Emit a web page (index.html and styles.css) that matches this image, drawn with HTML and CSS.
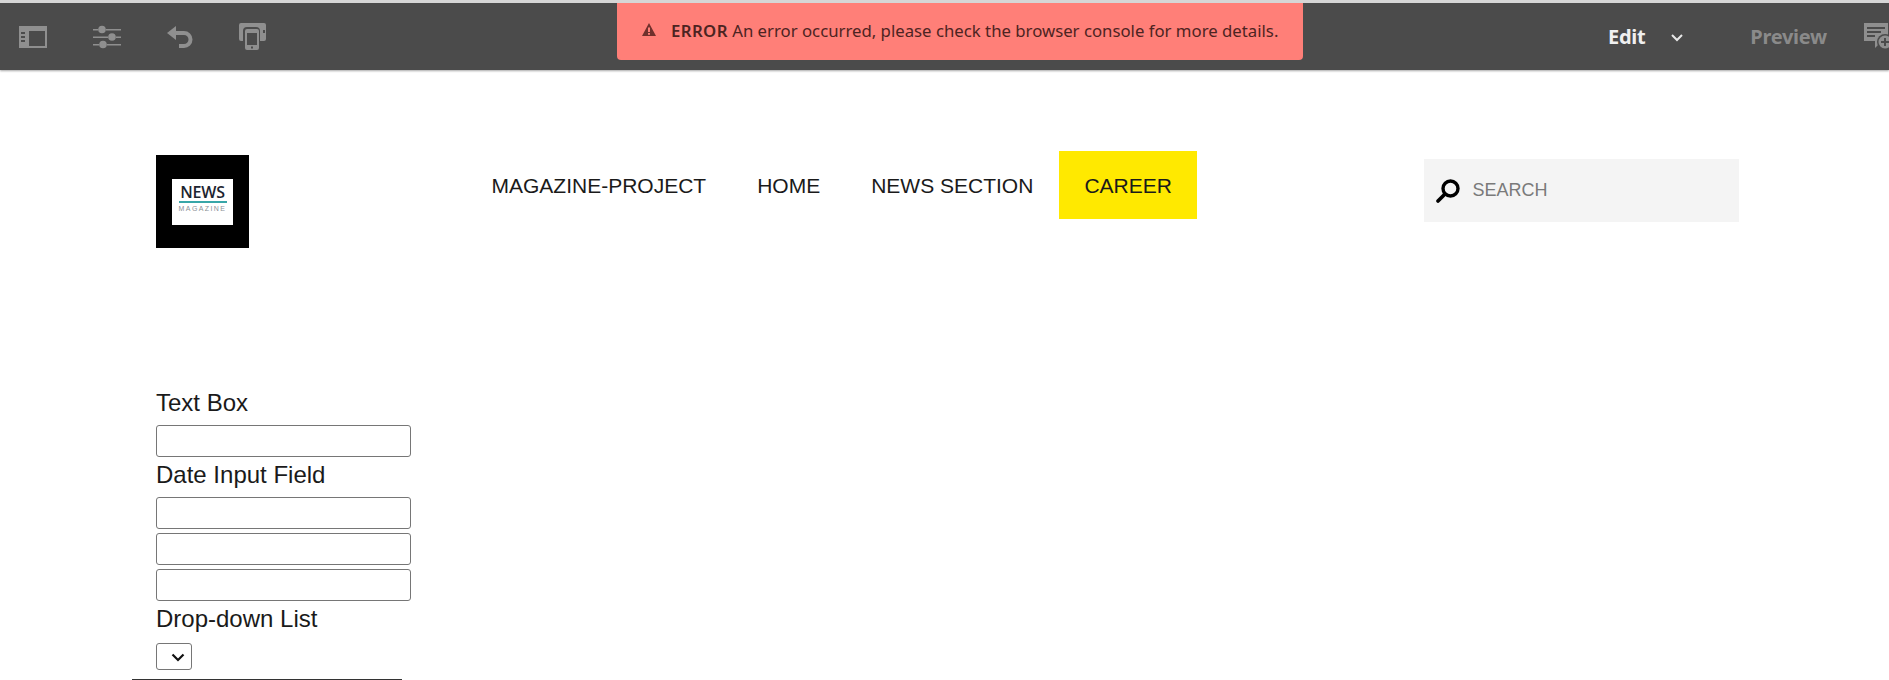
FILE: index.html
```html
<!DOCTYPE html>
<html lang="en">
<head>
<meta charset="utf-8">
<title>Career</title>
<link rel="stylesheet" href="styles.css">
</head>
<body>
<div class="toolbar">
  <div class="tools">
    <svg class="tool" viewBox="0 0 28 22" width="28" height="22"><path fill="#8f8f8f" fill-rule="evenodd" d="M0 0h28v22H0zM10 5v15h16V5zM2 6v2h4V6zM2 10v2h4v-2zM2 14v2h4v-2z"/></svg>
    <svg class="tool" viewBox="0 0 28 24" width="28" height="24"><g fill="#8f8f8f"><path d="M0 4h5v1.500H0zM13 4h15v1.500H13zM0 11.500h15V13H0zM23 11.500h5V13h-5zM0 19h6v1.500H0zM14 19h14v1.500H14z"/><circle cx="9" cy="4.500" r="3.800"/><circle cx="19" cy="12" r="3.800"/><circle cx="10" cy="19.500" r="3.800"/></g></svg>
    <svg class="tool" viewBox="0 0 26 22" width="26" height="22"><path fill="none" stroke="#8f8f8f" stroke-width="4" d="M4 7h13a6.500 6.500 0 0 1 0 13h-5"/><path fill="#8f8f8f" d="M9 0v14L0 7z"/></svg>
    <svg class="tool" viewBox="0 0 27 27" width="27" height="27"><path fill="#8f8f8f" fill-rule="evenodd" d="M2 0h23a2 2 0 0 1 2 2v14a2 2 0 0 1-2 2h-4V8a4 4 0 0 0-4-4H8a4 4 0 0 0-4 4v10H2a2 2 0 0 1-2-2V2a2 2 0 0 1 2-2zm22 7v3h2V7z"/><path fill="#8f8f8f" fill-rule="evenodd" d="M8 6h10a2 2 0 0 1 2 2v17a2 2 0 0 1-2 2H8a2 2 0 0 1-2-2V8a2 2 0 0 1 2-2zm0 4v12h10V10zm4 13.500v2h2v-2z"/></svg>
  </div>
  <div class="alert">
    <svg class="alert-icon" viewBox="0 0 14 13" width="14" height="13"><path fill="#70302c" fill-rule="evenodd" d="M7 0l7 13H0zM6 4.500v4.500h2V4.500zM6 10v1.800h2V10z"/></svg>
    <span class="alert-text"><b>ERROR</b> An error occurred, please check the browser console for more details.</span>
  </div>
  <div class="modes">
    <span class="mode-edit">Edit</span>
    <svg class="chevron" viewBox="0 0 12 8" width="12" height="8"><path fill="none" stroke="#e8e8e8" stroke-width="2" d="M1 1l5 5 5-5"/></svg>
    <span class="mode-preview">Preview</span>
    <svg class="annotate" viewBox="0 0 28 28" width="28" height="28"><path fill="#8f8f8f" d="M0 0h24v14h-8v6l-5 5v-7H0z"/><g fill="#4b4b4b"><path d="M3 4h18v2H3zM3 8h14v2H3zM3 12h8v2H3z"/><circle cx="21" cy="19" r="8"/></g><circle cx="21" cy="19" r="6.500" fill="#8f8f8f"/><path fill="#4b4b4b" d="M20 15h2v3h3v2h-3v3h-2v-3h-3v-2h3z"/></svg>
  </div>
</div>

<header class="site-header">
  <div class="logo">
    <div class="logo-card">
      <span class="logo-news">NEWS</span>
      <span class="logo-rule"></span>
      <span class="logo-mag">MAGAZINE</span>
    </div>
  </div>
  <nav class="nav">
    <a class="nav-item">MAGAZINE-PROJECT</a>
    <a class="nav-item">HOME</a>
    <a class="nav-item">NEWS SECTION</a>
    <a class="nav-item nav-active">CAREER</a>
  </nav>
  <div class="search">
    <svg class="search-icon" viewBox="0 0 26 26" width="26" height="26"><circle cx="15.500" cy="10.500" r="7.500" fill="none" stroke="#000" stroke-width="3.400"/><path stroke="#000" stroke-width="3.800" stroke-linecap="round" d="M9.500 16.500L3 23"/></svg>
    <span class="search-text">SEARCH</span>
  </div>
</header>

<form class="form">
  <label class="label">Text Box</label>
  <input class="field" type="text">
  <label class="label">Date Input Field</label>
  <input class="field" type="text">
  <input class="field" type="text">
  <input class="field" type="text">
  <label class="label">Drop-down List</label>
  <div class="select-wrap">
    <select class="select"></select>
    <svg class="select-arrow" viewBox="0 0 14 9" width="14" height="9"><path fill="none" stroke="#111" stroke-width="2.200" d="M1.500 1.500L7 7l5.500-5.500"/></svg>
  </div>
  <hr class="rule">
</form>
</body>
</html>
```
FILE: styles.css
```css
* { box-sizing: border-box; }
html, body { margin: 0; padding: 0; height: 680px; overflow: hidden; background: #fff; }
body { font-family: "Liberation Sans", Arial, sans-serif; color: #1a1a1a; }

.toolbar {
  height: 70px;
  background: #4b4b4b;
  border-top: 3px solid #d6d6d6;
  box-shadow: 0 1px 2px rgba(0,0,0,.35);
  display: flex;
  position: relative;
  padding-left: 19px;
}
.tools { display: flex; align-items: center; width: 598px; gap: 46px; flex: none; }
.tool { flex: none; }
.alert {
  width: 686px;
  height: 57px;
  flex: none;
  background: #ff7f78;
  border-radius: 0 0 4px 4px;
  display: flex;
  align-items: center;
  padding: 0 0 2px 25px;
  color: #4d2422;
  font-family: "Noto Sans", sans-serif;
  font-size: 16.750px;
  white-space: nowrap;
}
.alert-icon { margin-right: 15px; margin-top: -2px; flex: none; }
.alert-text b { font-weight: 600; letter-spacing: .4px; }
.modes {
  display: flex;
  align-items: center;
  margin-left: 305px;
  flex: none;
  font-family: "Noto Sans", sans-serif;
  font-size: 20px;
  font-weight: 700;
  letter-spacing: -0.3px;
}
.mode-edit { color: #f0f0f0; }
.chevron { margin-left: 26px; margin-top: 2px; }
.mode-preview { color: #8a8a8a; margin-left: 67px; }
.annotate { margin-left: 37px; flex: none; }

.site-header {
  display: flex;
  align-items: flex-start;
  padding: 81px 0 0 156px;
  height: 319px;
}
.logo {
  width: 93px;
  height: 93px;
  margin-top: 4px;
  background: #000;
  display: flex;
  align-items: center;
  justify-content: center;
  flex: none;
}
.logo-card {
  width: 61px;
  height: 46px;
  background: #fff;
  display: flex;
  flex-direction: column;
  align-items: center;
  padding-top: 5px;
}
.logo-news { font-size: 16px; font-weight: 600; line-height: 16px; letter-spacing: -.2px; font-family: "Open Sans", sans-serif; color: #1c2430; }
.logo-rule { width: 48px; height: 2px; background: #38a6a8; margin-top: 1px; }
.logo-mag { font-size: 7px; line-height: 9px; color: #8b8f95; letter-spacing: 1.400px; margin-top: 1px; white-space: nowrap; }

.nav { display: flex; align-items: center; height: 68px; margin-left: 217px; flex: none; }
.nav-item {
  font-size: 21px;
  line-height: 67px;
  padding: 1px 25.500px 0;
  color: #1a1a1a;
}
.nav-active { background: #ffe900; }

.search {
  width: 315px;
  height: 63px;
  margin: 8px 0 0 227px;
  background: #f4f4f4;
  display: flex;
  align-items: center;
  padding-left: 11px;
  flex: none;
}
.search-icon { flex: none; margin-right: 11px; }
.search-text { font-size: 18px; color: #7a7a7a; }

.form { display: flex; flex-direction: column; align-items: flex-start; padding-left: 156px; }
.label { font-size: 24px; line-height: 27px; height: 36px; color: #1a1a1a; }
.field {
  width: 255px;
  height: 32px;
  border: 1px solid #767676;
  border-radius: 3px;
  background: #fff;
  margin: 0 0 4px;
  padding: 0;
}
.select-wrap { position: relative; width: 36px; height: 27px; margin-top: 2px; }
.select {
  display: block;
  width: 36px;
  height: 27px;
  border: 1px solid #767676;
  border-radius: 3px;
  background: #fff;
  appearance: none;
}
.select-arrow { position: absolute; left: 15px; top: 10px; pointer-events: none; }
.rule {
  width: 270px;
  margin: 9px 0 0 -24px;
  border: 0;
  border-top: 1px solid #333;
}
```
